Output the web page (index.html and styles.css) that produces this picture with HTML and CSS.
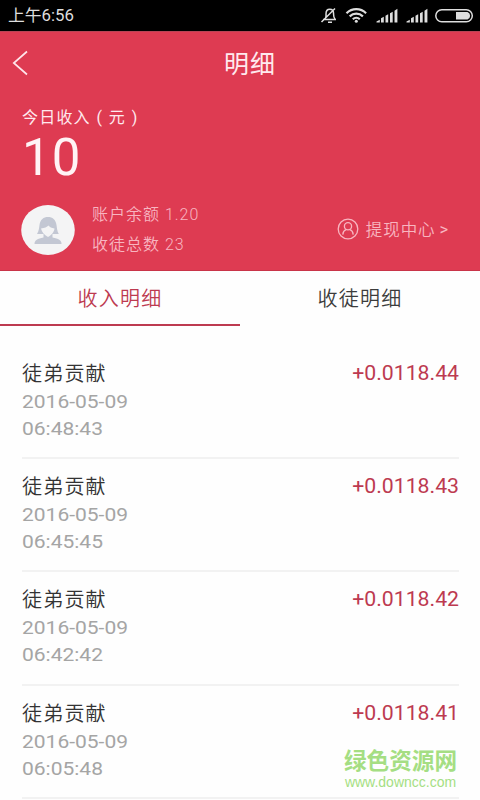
FILE: index.html
```html
<!DOCTYPE html>
<html lang="zh-CN">
<head>
<meta charset="utf-8">
<title>明细</title>
<link rel="stylesheet" href="styles.css">
</head>
<body>
<div class="status">
  <span class="clock">上午6:56</span>
  <svg class="status-icons" width="160" height="31" viewBox="0 0 160 31" fill="none" stroke="#dedede">
    <path d="M3 19.500h13M5 19c1.500-2 1-3 1-5 0-3 1.500-4.700 3.800-4.700s3.800 1.700 3.800 4.700c0 2-.2 3.500 1.400 5M8 22.300h4M1.500 22 15 8.500" stroke-width="1.500"/>
    <path d="M26.500 13.200c5.600-5.300 14-5.300 19.600 0M29.700 16.400c3.800-3.600 9.400-3.600 13.200 0M32.800 19.200c2-1.800 5-1.800 7 0" stroke-width="2.200"/>
    <circle cx="36.300" cy="21.300" r="1.500" fill="#dedede" stroke="none"/>
    <g fill="#dedede" stroke="none">
      <path id="signal" d="M56.500 22.500v-1l3.300-1.800v2.800zM61 22.500v-4.200l2.800-1.500v5.700zM65.500 22.500v-6.700l2.700-1.500v8.200zM70 22.500v-9.200l2.700-1.500v10.700zM74.500 22.500V10.700l2.900-2v13.800z"/>
      <use href="#signal" x="30"/>
      <path d="M136 12h11.500a4 4 0 0 1 0 7.500H136z"/>
    </g>
    <rect x="115.800" y="9.800" width="36.500" height="12" rx="6" stroke-width="1.500"/>
  </svg>
</div>
<header class="hero">
  <div class="navbar">
    <svg class="back" width="16" height="26" viewBox="0 0 16 26" fill="none" stroke="#ffe4ea" stroke-width="1.700"><path d="M15 1.500 1.800 13 15 24.500"/></svg>
    <h1>明细</h1>
  </div>
  <div class="today">今日收入<span class="paren">(</span>元<span class="paren">)</span></div>
  <div class="total">10</div>
  <div class="account">
    <svg class="avatar" width="54" height="50" viewBox="0 0 54 50">
      <ellipse cx="27" cy="25" rx="26.800" ry="25" fill="#f4f4f5"/>
      <g fill="#c3c7d3">
        <path d="M16 29c2-3 2-6 2.500-9C19.300 14.500 22.500 12 27 12s7.700 2.500 8.500 8c.5 3 .5 6 2.300 9z"/>
        <path d="M13.500 39c0-4 3-5.500 9-6.500v-5h9v5c6 1 9 2.500 9 6.500z"/>
      </g>
      <path d="M20 23.500c3.500-.3 6-1.500 7.500-3 1 1.500 3.200 2.500 6 3-.2 3-2.800 6.500-6.500 8.500-3.700-2-6.500-5.500-7-8.500z" fill="#f4f4f5"/>
    </svg>
    <div class="figures">
      <div>账户余额 1.20</div>
      <div>收徒总数 23</div>
    </div>
    <div class="withdraw">
      <svg width="22" height="22" viewBox="0 0 22 22" fill="none" stroke="#f8b5c0" stroke-width="1.300"><circle cx="11" cy="11" r="9.800"/><circle cx="11" cy="8.300" r="3.600"/><path d="M5.800 16.600c.2-2.800 1.400-4.300 3.300-5M16.200 16.600c-.2-2.800-1.400-4.300-3.300-5"/></svg>
      <span>提现中心</span><span class="more">&gt;</span>
    </div>
  </div>
</header>
<nav class="tabs">
  <div class="tab active">收入明细</div>
  <div class="tab">收徒明细</div>
</nav>
<main class="list">
  <div class="row"><div><div class="name">徒弟贡献</div><div class="time">2016-05-09<br>06:48:43</div></div><div class="amount">+0.0118.44</div></div>
  <div class="row"><div><div class="name">徒弟贡献</div><div class="time">2016-05-09<br>06:45:45</div></div><div class="amount">+0.0118.43</div></div>
  <div class="row"><div><div class="name">徒弟贡献</div><div class="time">2016-05-09<br>06:42:42</div></div><div class="amount">+0.0118.42</div></div>
  <div class="row"><div><div class="name">徒弟贡献</div><div class="time">2016-05-09<br>06:05:48</div></div><div class="amount">+0.0118.41</div></div>
</main>
<div class="watermark"><div class="mark-name">绿色资源网</div><div class="mark-url">www.downcc.com</div></div>
</body>
</html>
```
FILE: styles.css
```css
* { box-sizing: border-box; }
body {
  margin: 0;
  width: 480px;
  height: 800px;
  overflow: hidden;
  position: relative;
  background: #fefefe;
  font-family: Roboto, "Noto Sans CJK SC", sans-serif;
}
.status {
  height: 31px;
  background: #000;
  color: #dedede;
  display: flex;
  justify-content: space-between;
  padding-left: 8px;
}
.clock { font-size: 16px; line-height: 31px; transform: scaleX(1.05); transform-origin: left; }
.hero {
  height: 240px;
  background: #de3b52;
  border-top: 1px solid #b94455;
  border-bottom: 1px solid #c93449;
  color: #ffe9ee;
  padding: 0 22px;
}
.navbar { height: 62px; display: flex; align-items: center; margin-left: -10px; }
.back { flex: none; }
.navbar h1 {
  margin: 3px 0 0 196px;
  font-size: 25px;
  line-height: 36px;
  font-weight: 400;
  letter-spacing: 1px;
}
.today { font-size: 16px; line-height: 24px; margin-top: 12px; letter-spacing: 1.2px; display: flex; }
.paren { width: 18px; text-align: center; }
.total { font-size: 51px; line-height: 56px; letter-spacing: 1px; color: #fff3f5; }
.account { display: flex; align-items: center; height: 60px; margin-top: 14px; color: #f8b5c0; }
.avatar { flex: none; margin-left: -1px; }
.figures { margin-left: 17px; font-size: 16px; font-weight: 350; line-height: 30px; letter-spacing: 1px; }
.withdraw { display: flex; align-items: center; font-size: 16.5px; font-weight: 350; letter-spacing: .9px; margin: -2px 9px 0 auto; }
.withdraw svg { margin-right: 7px; }
.more { margin-left: 4px; font-weight: 400; }
.tabs { display: flex; height: 55px; }
.tab {
  flex: 1;
  text-align: center;
  font-size: 20px;
  font-weight: 350;
  line-height: 56px;
  letter-spacing: 1.2px;
  color: #3c3c3c;
}
.tab.active { color: #bd3a50; border-bottom: 2px solid #bd3a50; }
.list { padding: 20px 21px 0 22px; }
.row { display: flex; justify-content: space-between; height: 113.2px; padding-top: 12px; border-bottom: 2px solid #f2f2f2; }
.name { font-size: 20px; font-weight: 350; line-height: 32px; height: 30px; letter-spacing: 1.2px; color: #333; }
.time { font-size: 19px; line-height: 27px; transform: scaleX(1.105); transform-origin: left; color: #a5a5a5; }
.amount { font-size: 19.500px; line-height: 32px; transform: scaleX(1.09); transform-origin: right; color: #bd3a50; }
.watermark { position: absolute; right: 23px; bottom: 11px; text-align: center; color: #a5de83; }
.mark-name { font-size: 22.600px; line-height: 27px; font-weight: 700; }
.mark-url { font-family: "Liberation Sans", sans-serif; font-size: 14px; line-height: 14px; }
```
